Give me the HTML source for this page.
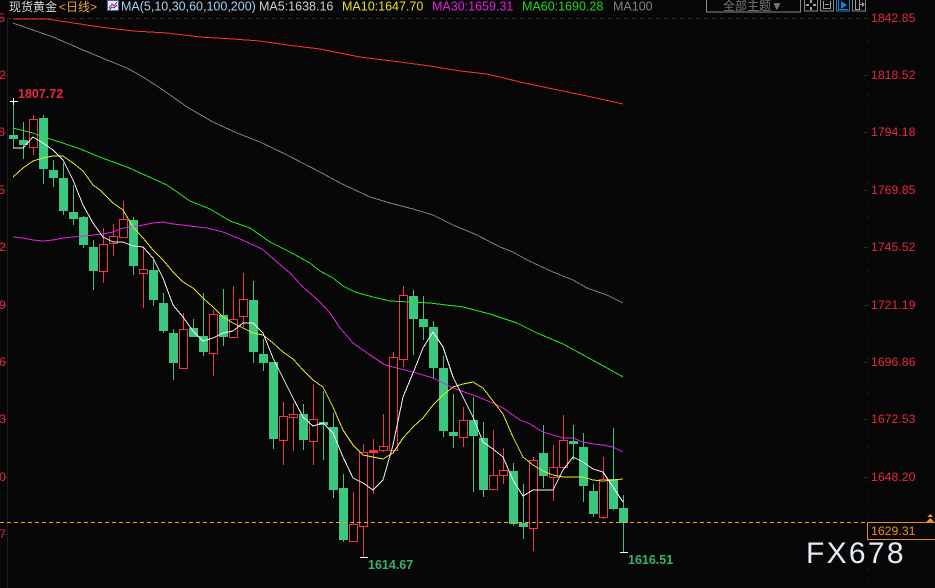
<!DOCTYPE html>
<html><head><meta charset="utf-8"><style>
html,body{margin:0;padding:0;background:#070708;width:935px;height:588px;overflow:hidden}
svg{position:absolute;left:0;top:0;display:block}
text{font-family:"Liberation Sans","Noto Sans CJK SC",sans-serif;font-size:12px}
.r{fill:#e8283f;font-size:12.3px}
.h{font-size:12.5px}
.b{font-size:12.5px;font-weight:bold}
</style></head><body>
<svg width="935" height="588" viewBox="0 0 935 588">
<rect width="935" height="588" fill="#070708"/>
<g shape-rendering="crispEdges" fill="none">
<path d="M0 18.5H867" stroke="#2c2c2c" stroke-dasharray="4 4"/>
<path d="M7.5 18V588" stroke="#1e1e1e"/>
<path d="M868.5 18V588" stroke="#303030" stroke-dasharray="1 10"/>
<path d="M3 75.5h4M3 132.5h4M3 190.5h4M3 247.5h4M3 305.5h4M3 362.5h4M3 419.5h4M3 477.5h4M3 534.5h4" stroke="#2a2a2a"/>
<path d="M864 75.5h4M864 132.5h4M864 190.5h4M864 247.5h4M864 305.5h4M864 362.5h4M864 419.5h4M864 477.5h4" stroke="#2a2a2a"/>
<!-- green wicks -->
<path stroke="#3ac880" d="M13.5 101V148M23.5 122V159M43.5 115V184M53.5 160V187M63.5 163V215M73.5 185V225M83.5 216V248M93.5 240V290M133.5 217V275M153.5 260V306M163.5 293V333M173.5 329V380M193.5 319V337M203.5 293V356M223.5 289V346M253.5 281V363M263.5 339V371M273.5 362V449M303.5 404V450M323.5 391V460M333.5 413V498M343.5 474V542M413.5 290V355M423.5 296V340M433.5 321V379M443.5 356V437M453.5 394V448M473.5 397V492M483.5 422V497M513.5 463V526M523.5 484V539M543.5 425V488M573.5 425V460M583.5 433V502M593.5 484V517M613.5 428V510M623.5 495V552"/>
<!-- red wicks -->
<path stroke="#f5334f" d="M33.5 115V155M103.5 228V283M113.5 224V256M123.5 201V238M143.5 247V308M183.5 313V368M213.5 310V376M233.5 286V337M243.5 273V327M283.5 402V465M293.5 403V451M313.5 384V465M353.5 492V541M363.5 444V557M373.5 439V494M383.5 414V452M393.5 352V452M403.5 286V367M463.5 407V447M493.5 430V489M503.5 448V484M533.5 457V551M553.5 445V501M563.5 415V467M603.5 457V519"/>
<!-- green bodies -->
<path fill="#3ac880" d="M9 135h9v4h-9zM19 140h9v5h-9zM39 118h9v51h-9zM49 170h9v8h-9zM59 178h9v33h-9zM69 212h9v7h-9zM79 217h9v28h-9zM89 247h9v24h-9zM129 220h9v46h-9zM149 270h9v30h-9zM159 303h9v28h-9zM169 333h9v30h-9zM189 328h9v9h-9zM199 336h9v16h-9zM219 315h9v22h-9zM249 300h9v52h-9zM259 354h9v9h-9zM269 362h9v77h-9zM299 414h9v26h-9zM319 422h9v3h-9zM329 427h9v63h-9zM339 488h9v52h-9zM409 296h9v23h-9zM419 319h9v8h-9zM429 327h9v41h-9zM439 368h9v63h-9zM449 432h9v4h-9zM469 420h9v16h-9zM479 438h9v52h-9zM509 471h9v53h-9zM519 523h9v4h-9zM539 453h9v23h-9zM569 441h9v3h-9zM579 447h9v39h-9zM589 491h9v23h-9zM609 479h9v30h-9zM619 508h9v15h-9z"/>
<!-- red bodies -->
<path fill="#000" stroke="#f5334f" d="M29.5 119.5h8v28h-8zM99.5 244.5h8v27h-8zM109.5 236.5h8v7h-8zM119.5 219.5h8v18h-8zM139.5 269.5h8v4h-8zM179.5 329.5h8v39h-8zM209.5 314.5h8v39h-8zM229.5 319.5h8v18h-8zM239.5 299.5h8v17h-8zM279.5 416.5h8v24h-8zM289.5 414.5h8v3h-8zM309.5 419.5h8v22h-8zM349.5 524.5h8v17h-8zM359.5 452.5h8v74h-8zM369.5 450.5h8v2h-8zM379.5 446.5h8v4h-8zM389.5 357.5h8v93h-8zM399.5 295.5h8v64h-8zM459.5 420.5h8v17h-8zM489.5 475.5h8v14h-8zM499.5 470.5h8v5h-8zM529.5 460.5h8v68h-8zM549.5 467.5h8v10h-8zM559.5 440.5h8v27h-8zM599.5 479.5h8v38h-8z"/>
<path fill="#f5334f" d="M369 450h9v3h-9z"/>
<!-- MA200 -->
<polyline stroke="#ff3030" points="13,19 47,19 67,22 100,27 133,31 167,33 200,37 233,39 260,41 287,45 320,49 360,57 400,62 430,66 460,71 487,74 520,82 553,89 587,96 623,104"/>
<!-- MA100 -->
<polyline stroke="#808080" points="13,23 33,30 53,37 83,50 107,60 127,68 143,77 163,90 187,107 213,122 237,133 260,142 287,155 320,172 340,183 353,189 370,197 390,203 413,209 433,215 453,225 477,235 500,247 513,252 527,260 553,272 573,280 587,288 607,295 623,303"/>
<!-- MA60 -->
<polyline stroke="#22e822" points="13,128 33,133 43,137 63,143 83,150 97,156 113,162 127,167 147,176 167,185 190,201 210,209 230,221 250,228 270,242 290,252 310,263 320,271 333,278 343,286 355,292 373,297 390,301 430,303 463,307 490,314 517,323 537,333 563,344 587,357 607,368 623,377"/>
<!-- MA30 -->
<polyline stroke="#e020e0" points="13,237 23,238 33,240 43,241 53,240 63,238 73,237 83,236 93,235 103,234 113,232 123,228 133,227 143,225 153,223 163,222 173,224 183,225 190,226 207,228 223,232 240,239 262,249 277,262 290,273 303,287 320,302 330,313 340,328 353,343 370,355 385,365 413,372 433,378 453,388 473,395 483,399 493,403 503,408 520,420 530,424 543,432 553,435 563,438 573,438 583,442 593,444 603,445 613,447 623,452"/>
<!-- MA10 -->
<polyline stroke="#e8e81c" points="13,177 23,168 33,161 43,158 53,156 63,156 73,163 83,171 93,185 100,190 113,203 123,210 133,227 143,238 153,250 163,260 173,272 183,282 193,288 203,298 213,307 223,317 233,323 243,328 253,333 263,335 273,343 283,352 293,359 303,370 313,380 323,387 333,407 343,430 353,445 363,455 373,457 383,459 393,453 403,438 413,427 423,418 433,405 443,395 453,387 463,384 473,382 483,388 493,401 503,414 513,437 523,457 533,465 543,471 553,475 563,477 573,477 583,477 593,480 603,481 613,480 623,479"/>
<!-- MA5 -->
<polyline stroke="#f4f4f4" points="13,148 23,148 33,137 43,143 53,150 63,160 73,180 83,205 93,223 103,237 113,242 123,242 133,246 143,247 153,258 163,278 173,305 183,317 193,331 203,341 213,338 223,333 233,331 243,323 253,323 263,333 273,358 283,378 293,398 303,417 313,426 323,423 333,433 343,457 353,478 363,483 373,490 383,480 393,445 403,397 413,373 423,348 433,332 443,347 453,377 463,397 473,417 483,442 493,449 503,457 513,480 523,496 533,490 543,490 553,490 563,470 573,457 583,462 593,469 603,472 613,487 623,502"/>
<!-- extreme crosses -->
<path stroke="#fff" d="M10 101.5h8M13.5 98v7M360 557.5h8M620 552.5h8"/>
<!-- price line -->
<path stroke="#ff9a28" stroke-dasharray="4 3" d="M0 522.5H867"/>
<rect x="867.5" y="522.5" width="70" height="17" fill="#070708" stroke="#e89028"/>
<path fill="#f09828" d="M930 514l3 3h-6zM930 518l4 4h-8z"/>
<!-- top icons -->
<rect x="706.5" y="-2" width="94" height="14" stroke="#8a8a8a"/>
<rect x="804.5" y="-2" width="13" height="13" stroke="#8a8a8a"/>
<rect x="820.5" y="-2" width="13" height="13" stroke="#8a8a8a"/>
<rect x="836.5" y="-2" width="13" height="13" stroke="#1a7ed0"/>
<rect x="852.5" y="-2" width="13" height="13" stroke="#8a8a8a"/>
<path fill="#a0a0a0" d="M810 0h2v3h-2zM806 4h3v2h-3zM813 4h3v2h-3zM810 7h2v3h-2z"/>
<path stroke="#a0a0a0" d="M823.5 1v8M830.5 1v8M823 8.5h8M825 4.5h4"/>
<path stroke="#1a7ed0" d="M838.5 0v10M838 9.5h10"/>
<path fill="#1a7ed0" d="M841 1l6 4-6 4z"/>
<path stroke="#a0a0a0" d="M855.5 0v10M859.5 0v10M855 9.5h5M860 4.5h4"/>
<path fill="#a0a0a0" d="M862 2l3 2.5-3 2.5z"/>
<!-- header small icon -->
<rect x="107.5" y="0.5" width="11" height="10" fill="#e8eef8" stroke="#4060c0"/>
<path stroke="#e02020" d="M109 8l3-4 2 2 3-4"/>
<path stroke="#2040c0" d="M109 10l3-3 2 1 3-3"/>
</g>
<!-- header text -->
<text x="9" y="11" fill="#d8d8d8">现货黄金</text>
<text x="59" y="11" fill="#e8a040">&lt;日线&gt;</text>
<text class="h" x="121" y="10.500" fill="#a8d0f0">MA(5,10,30,60,100,200)</text>
<text class="h" x="259" y="10.500" fill="#c8d0d8">MA5:1638.16</text>
<text class="h" x="342" y="10.500" fill="#e8e020">MA10:1647.70</text>
<text class="h" x="432" y="10.500" fill="#e020e0">MA30:1659.31</text>
<text class="h" x="522" y="10.500" fill="#20d820">MA60:1690.28</text>
<text class="h" x="613" y="10.500" fill="#808080">MA100</text>
<text x="723" y="10" fill="#787878">全部主题▼</text>
<!-- right axis -->
<text class="r" x="871" y="22">1842.85</text>
<text class="r" x="871" y="79">1818.52</text>
<text class="r" x="871" y="136">1794.18</text>
<text class="r" x="871" y="194">1769.85</text>
<text class="r" x="871" y="251">1745.52</text>
<text class="r" x="871" y="309">1721.19</text>
<text class="r" x="871" y="366">1696.86</text>
<text class="r" x="871" y="423">1672.53</text>
<text class="r" x="871" y="481">1648.20</text>
<text x="871" y="535" fill="#f09020" style="font-size:12.3px">1629.31</text>
<!-- left axis clipped -->
<g text-anchor="end">
<text class="r" x="5" y="22">5</text>
<text class="r" x="6" y="79">2</text>
<text class="r" x="5" y="136">8</text>
<text class="r" x="5" y="194">5</text>
<text class="r" x="6" y="251">2</text>
<text class="r" x="6" y="309">9</text>
<text class="r" x="6" y="366">6</text>
<text class="r" x="6" y="423">3</text>
<text class="r" x="6" y="481">0</text>
<text class="r" x="6" y="538">7</text>
</g>
<!-- price labels -->
<text class="b" x="18" y="98" fill="#e8283f">1807.72</text>
<text class="b" x="368" y="569" fill="#3ab070">1614.67</text>
<text class="b" x="628" y="564" fill="#3ab070">1616.51</text>
<!-- watermark -->
<text x="806" y="563" fill="#e4ecf4" letter-spacing="2.3" style="font-size:30px">FX678</text>
</svg>
</body></html>
